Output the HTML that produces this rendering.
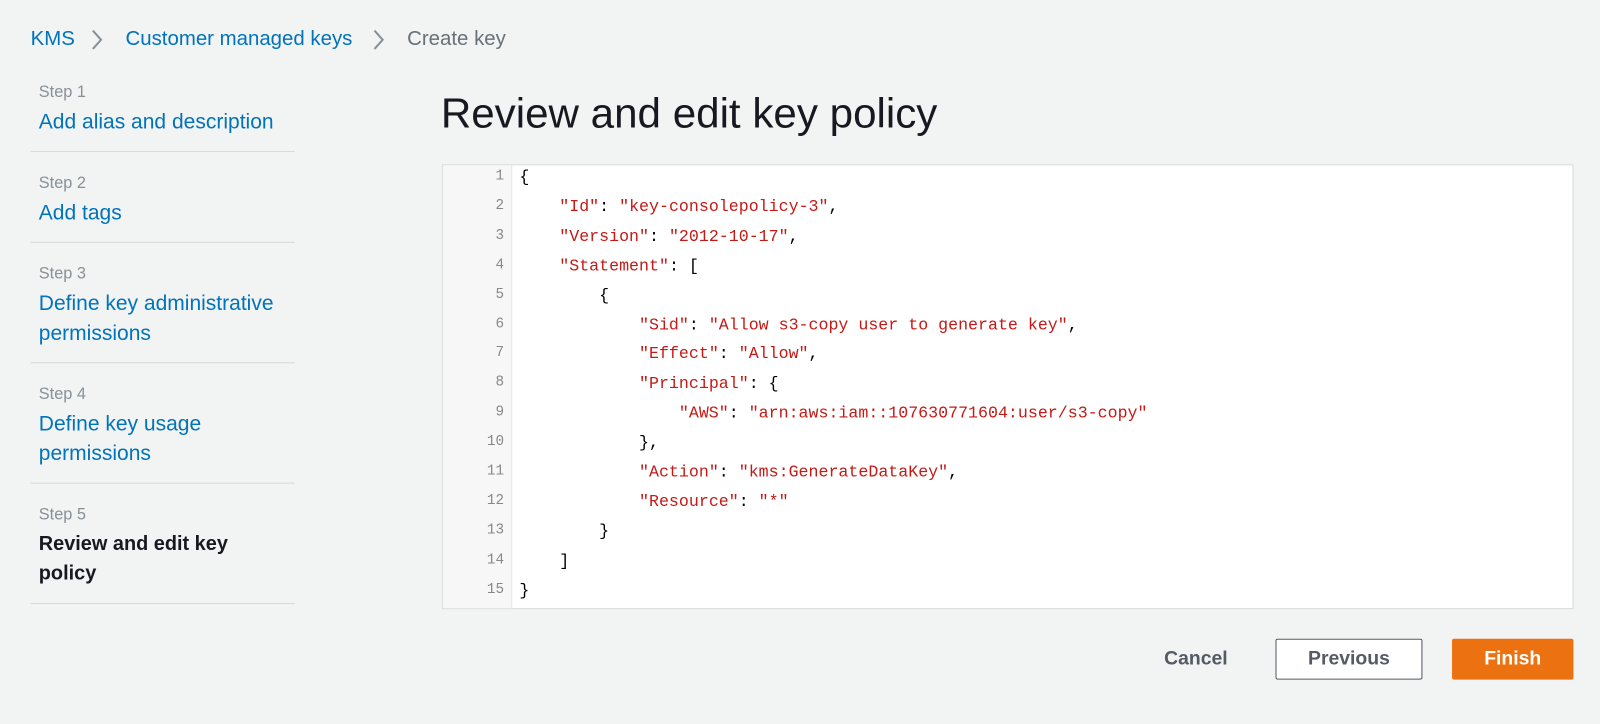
<!DOCTYPE html>
<html><head><style>
body{margin:0;width:1600px;height:724px;background:#f2f3f3;font-family:"Liberation Sans",sans-serif;position:relative;overflow:hidden}
#w{position:absolute;left:0;top:0;width:1568px;height:710px;transform:scale(1.0204);transform-origin:0 0}
.a{position:absolute;white-space:nowrap}
.bc{top:27px;font-size:20px;color:#0073bb}
.step{left:38px;font-size:16px;color:#879196}
.lk{left:38px;font-size:20.6px;color:#0073bb;line-height:29px}
.hr{position:absolute;left:30px;width:259px;height:1px;background:#d5dbdb}
.code{position:absolute;left:433px;top:161px;width:1107px;height:434px;background:#fff;border:1px solid #d5dbdb}
.gut{position:absolute;left:0;top:0;width:67px;height:100%;background:#f7f7f7;border-right:1px solid #e6e6e6}
.ln{position:absolute;right:6px;font:14px "Liberation Mono",monospace;color:#888;text-align:right}
.cl{position:absolute;left:75px;font:16.3px "Liberation Mono",monospace;color:#000;white-space:pre}
.s{color:#c41a16}
.btn{position:absolute;top:626px;height:40px;font-size:19px;font-weight:bold;display:flex;align-items:center;justify-content:center;box-sizing:border-box;border-radius:2px}
</style></head><body><div id="w">
<div class="a bc" style="left:30px">KMS</div>
<svg class="a" style="left:88px;top:28px" width="14" height="22"><path d="M3 2l8 9-8 9" fill="none" stroke="#879196" stroke-width="2"/></svg>
<div class="a bc" style="left:123px">Customer managed keys</div>
<svg class="a" style="left:364px;top:28px" width="14" height="22"><path d="M3 2l8 9-8 9" fill="none" stroke="#879196" stroke-width="2"/></svg>
<div class="a bc" style="left:399px;color:#687078">Create key</div>

<div class="a step" style="top:82px">Step 1</div>
<div class="a lk" style="top:105px">Add alias and description</div>
<div class="hr" style="top:148px"></div>
<div class="a step" style="top:171px">Step 2</div>
<div class="a lk" style="top:194px">Add tags</div>
<div class="hr" style="top:237px"></div>
<div class="a step" style="top:260px">Step 3</div>
<div class="a lk" style="top:283px">Define key administrative<br>permissions</div>
<div class="hr" style="top:355px"></div>
<div class="a step" style="top:378px">Step 4</div>
<div class="a lk" style="top:401px">Define key usage<br>permissions</div>
<div class="hr" style="top:473px"></div>
<div class="a step" style="top:496px">Step 5</div>
<div class="a lk" style="top:519px;color:#16191f;font-weight:bold;font-size:19.5px">Review and edit key<br>policy</div>
<div class="hr" style="top:591px"></div>

<div class="a" style="left:432px;top:88px;font-size:41.3px;color:#16191f">Review and edit key policy</div>

<div class="code"></div>
<div class="btn" style="left:1130px;width:84px;color:#545b64">Cancel</div>
<div class="btn" style="left:1250px;width:144px;background:#fff;border:1px solid #545b64;color:#545b64">Previous</div>
<div class="btn" style="left:1423px;width:119px;background:#ec7211;color:#fff">Finish</div>
</div>
<script>
var L=[
'{',
'    <span class="s">"Id"</span>: <span class="s">"key-consolepolicy-3"</span>,',
'    <span class="s">"Version"</span>: <span class="s">"2012-10-17"</span>,',
'    <span class="s">"Statement"</span>: [',
'        {',
'            <span class="s">"Sid"</span>: <span class="s">"Allow s3-copy user to generate key"</span>,',
'            <span class="s">"Effect"</span>: <span class="s">"Allow"</span>,',
'            <span class="s">"Principal"</span>: {',
'                <span class="s">"AWS"</span>: <span class="s">"arn:aws:iam::107630771604:user/s3-copy"</span>',
'            },',
'            <span class="s">"Action"</span>: <span class="s">"kms:GenerateDataKey"</span>,',
'            <span class="s">"Resource"</span>: <span class="s">"*"</span>',
'        }',
'    ]',
'}'];
var c=document.querySelector('.code'),h='<div class="gut"></div>';
for(var i=0;i<L.length;i++){var t=i*28.9+2;
h+='<div class="ln" style="top:'+(t+1)+'px;left:0;width:60px">'+(i+1)+'</div><div class="cl" style="top:'+t+'px">'+L[i]+'</div>';}
c.innerHTML=h;
</script>
</body></html>
